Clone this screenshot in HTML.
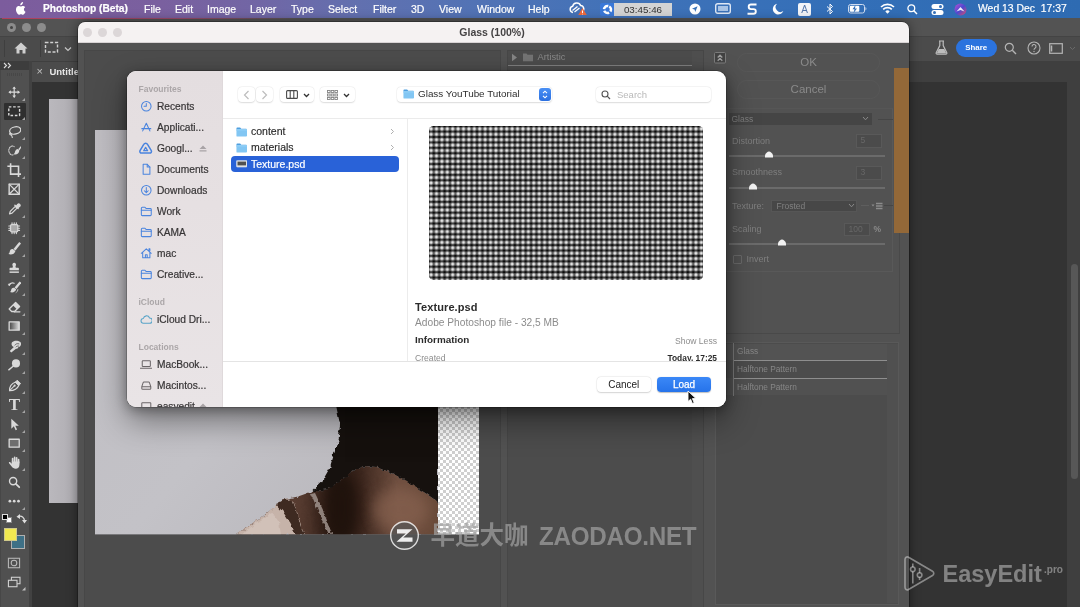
<!DOCTYPE html>
<html><head><meta charset="utf-8"><title>Glass</title>
<style>
*{box-sizing:border-box;margin:0;padding:0}
html,body{width:1080px;height:607px;overflow:hidden;background:#323232;font-family:"Liberation Sans","Noto Sans CJK SC",sans-serif;}
.a{position:absolute}
#root{will-change:transform;position:relative;width:1080px;height:607px;overflow:hidden;background:#323232}
/* menubar */
#menubar{left:0;top:0;width:1080px;height:18.500px;background:linear-gradient(90deg,#7c5c9d 0%,#7a609f 15%,#7166a5 24%,#6270af 33%,#5273b5 44%,#4072b8 58%,#336fb8 78%,#2e6bb2 100%);color:#fff;font-size:10.5px;line-height:18px;white-space:nowrap}
#menubar span{position:absolute;top:0;-webkit-text-stroke:.2px #fff}
/* ps chrome */
#pstop{left:0;top:18px;width:1080px;height:18px;background:#535353}
#psopt{left:0;top:36px;width:1080px;height:25px;background:#4b4b4b;border-top:1px solid #444}
.tl{width:9px;height:9px;border-radius:50%}
.sbi{font-size:10.200px;line-height:14px;color:#373536;white-space:nowrap;-webkit-text-stroke:.2px #373536}
.sbh{font-size:8.500px;font-weight:bold;line-height:14px;color:#aba6a8;white-space:nowrap}
.tb{background:#fff;border-radius:4px;box-shadow:0 0 0 .5px rgba(0,0,0,.045),0 .5px 1.500px rgba(0,0,0,.12)}
.fl{font-size:10.500px;line-height:14px;color:#2a2a2a;white-space:nowrap;-webkit-text-stroke:.15px #2a2a2a}
.gl{font-size:9px;line-height:13px;color:#7f7f7f;white-space:nowrap}
.gs{font-size:8.300px;line-height:13px;color:#878787;white-space:nowrap}
.gb{border:1px solid #595959;background:#4b4b4b;color:#686868;font-size:8.500px;line-height:11px;padding-left:4px}
.sl{left:729px;width:156px;height:2px;background:#6b6b6b}
</style></head><body><div id="root">
<div id="menubar" class="a">
<svg class="a" style="left:14px;top:2px" width="12" height="14" viewBox="0 0 12 14"><path fill="#fff" d="M8.3 2.2C8.9 1.5 9.2.7 9.1 0 8.400.05 7.600.5 7.100 1.100 6.600 1.600 6.200 2.500 6.300 3.200 7.100 3.250 7.800 2.800 8.300 2.200ZM9.900 7.400C9.900 5.900 11.100 5.200 11.200 5.150 10.500 4.150 9.400 4 9.050 4 8.100 3.900 7.250 4.550 6.800 4.550 6.300 4.550 5.600 4 4.850 4.020 3.850 4.040 2.950 4.600 2.450 5.480 1.400 7.250 2.180 9.900 3.180 11.350 3.680 12.060 4.270 12.850 5.050 12.820 5.800 12.790 6.080 12.340 6.980 12.340 7.880 12.340 8.140 12.820 8.930 12.800 9.740 12.790 10.250 12.080 10.740 11.360 11.310 10.540 11.540 9.750 11.560 9.700 11.540 9.700 9.910 9.070 9.900 7.400Z"/></svg>
<span style="left:43px;font-weight:bold;font-size:10.200px" id="m0">Photoshop (Beta)</span>
<span style="left:144px" id="m1">File</span>
<span style="left:175px" id="m2">Edit</span>
<span style="left:207px" id="m3">Image</span>
<span style="left:250px" id="m4">Layer</span>
<span style="left:291px" id="m5">Type</span>
<span style="left:328px" id="m6">Select</span>
<span style="left:373px" id="m7">Filter</span>
<span style="left:411px" id="m8">3D</span>
<span style="left:439px" id="m9">View</span>
<span style="left:477px" id="m10">Window</span>
<span style="left:528px" id="m11">Help</span>
<!-- status icons -->
<svg class="a" style="left:568px;top:2px" width="20" height="14" viewBox="0 0 20 14"><path d="M5 10.500a3.200 3.200 0 0 1-.3-6.300 4.200 4.200 0 0 1 8-.6 3.300 3.300 0 0 1 1.300 6.200" fill="none" stroke="#fff" stroke-width="1.500"/><path d="M4.500 8.500 9.500 4.500M6.500 10 11.500 6" stroke="#fff" stroke-width="1.300"/><path d="M14.500 6 18.800 13h-8.600z" fill="#f06a3c"/><path d="M14.500 8.500v2.500M14.500 11.800v.6" stroke="#fff" stroke-width="1"/></svg>
<div class="a" style="left:600px;top:2.500px;width:14px;height:13px;background:#3a78d8;border-radius:2px 0 0 2px"></div>
<svg class="a" style="left:601.500px;top:3.500px" width="11" height="11" viewBox="0 0 11 11"><circle cx="5.500" cy="5.500" r="3.500" fill="none" stroke="#fff" stroke-width="2.500" stroke-dasharray="5.700 1.630" transform="rotate(-60 5.500 5.500)"/></svg>
<div class="a" style="left:614px;top:2.500px;width:58px;height:13px;background:#d4d4d4;color:#333;font-size:9.800px;line-height:13px;text-align:center">03:45:46</div>
<svg class="a" style="left:689px;top:3px" width="12" height="12" viewBox="0 0 12 12"><circle cx="6" cy="6" r="5.500" fill="#fff"/><path d="M8.600 3.200 3 5.800l2.600.6.600 2.600z" fill="#3570b8"/></svg>
<svg class="a" style="left:715px;top:3px" width="16" height="12" viewBox="0 0 16 12"><rect x=".7" y=".7" width="14.600" height="9.600" rx="2" fill="none" stroke="#dfe8f5" stroke-width="1.400"/><rect x="3" y="3" width="10" height="5" fill="#aac4e6"/></svg>
<svg class="a" style="left:746px;top:3px" width="12" height="12" viewBox="0 0 12 12"><path d="M10.500 1.500H5a2.300 2.300 0 0 0 0 4.600h2.500a2.300 2.300 0 0 1 0 4.600H1.500" fill="none" stroke="#fff" stroke-width="1.900"/></svg>
<svg class="a" style="left:772px;top:3px" width="12" height="12" viewBox="0 0 12 12"><path d="M5 .8A5.400 5.400 0 1 0 11.300 8 4.800 4.800 0 0 1 5 .8Z" fill="#fff"/></svg>
<div class="a" style="left:798px;top:3px;width:13px;height:13px;background:#f2f4f8;border-radius:2px;color:#5577aa;font-size:10px;line-height:13px;text-align:center">A</div>
<svg class="a" style="left:826px;top:3px" width="8" height="12" viewBox="0 0 8 12"><path d="M1 3.500 6.500 8.500 4 11V1l2.500 2.500L1 8.500" fill="none" stroke="#fff" stroke-width="1"/></svg>
<svg class="a" style="left:848px;top:4px" width="20" height="10" viewBox="0 0 20 10"><rect x=".5" y=".5" width="16" height="8.500" rx="2" fill="none" stroke="#cfdcf0" stroke-width="1"/><rect x="1.800" y="1.800" width="9.500" height="6" rx="1" fill="#fff"/><path d="M17.500 3v3.500c1.200-.3 1.200-3.200 0-3.500z" fill="#cfdcf0"/><path d="M7.500 1 4.500 5.300h2L5.500 9l3.500-4.500H7z" fill="#3570b8"/></svg>
<svg class="a" style="left:880px;top:3px" width="15" height="11" viewBox="0 0 15 11"><path d="M1 4a9.500 9.500 0 0 1 13 0M3.200 6.300a6.300 6.300 0 0 1 8.600 0" fill="none" stroke="#fff" stroke-width="1.700"/><path d="M5.300 8.400a3.200 3.200 0 0 1 4.400 0L7.500 10.800z" fill="#fff"/></svg>
<svg class="a" style="left:907px;top:4px" width="11" height="11" viewBox="0 0 11 11"><circle cx="4.300" cy="4.300" r="3.400" fill="none" stroke="#fff" stroke-width="1.300"/><path d="M6.800 6.800 10 10" stroke="#fff" stroke-width="1.500"/></svg>
<svg class="a" style="left:931px;top:4px" width="13" height="11" viewBox="0 0 13 11"><rect x=".5" y="0" width="12" height="5" rx="2.500" fill="#fff"/><circle cx="9.500" cy="2.500" r="1.500" fill="#3570b8"/><rect x=".5" y="6" width="12" height="5" rx="2.500" fill="#fff"/><circle cx="3.500" cy="8.500" r="1.500" fill="#3570b8"/></svg>
<svg class="a" style="left:954px;top:3px" width="13" height="13" viewBox="0 0 13 13"><defs><linearGradient id="siri" x1="0" y1="0" x2="1" y2="1"><stop offset="0" stop-color="#c04fd0"/><stop offset=".5" stop-color="#4a4ad0"/><stop offset="1" stop-color="#e04a6a"/></linearGradient></defs><circle cx="6.500" cy="6.500" r="6" fill="url(#siri)"/><path d="M2.500 8.500 6.500 4l4 4.500-4-1.500z" fill="#fff" opacity=".9"/></svg>
<span style="left:978px;font-size:10.400px;" id="mdate">Wed 13 Dec&nbsp;&nbsp;17:37</span>
</div>


<div id="pstop" class="a"></div>
<div class="a" style="left:2px;top:18px;width:300px;height:1px;background:linear-gradient(90deg,#b0405a,#9a4a6a 60%,rgba(120,80,120,0))"></div>
<div class="a tl" style="left:6.500px;top:22.500px;background:#8c8c8c"></div><div class="a" style="left:9.500px;top:25.500px;width:3px;height:3px;border-radius:50%;background:#444"></div>
<div class="a tl" style="left:21.500px;top:22.500px;background:#8c8c8c"></div>
<div class="a tl" style="left:36.500px;top:22.500px;background:#8c8c8c"></div>
<div id="psopt" class="a"></div>
<div class="a" style="left:4px;top:40px;width:1px;height:17px;background:#3f3f3f"></div>
<svg class="a" style="left:14px;top:42px" width="14" height="12" viewBox="0 0 14 12"><path d="M7 .5.500 6.500H2.500V11.500H5.500V8H8.500V11.500H11.500V6.500H13.500z" fill="#cfcfcf"/></svg>
<div class="a" style="left:40px;top:40px;width:1px;height:17px;background:#3d3d3d"></div>
<svg class="a" style="left:44px;top:41px" width="15" height="13" viewBox="0 0 15 13"><rect x="1.500" y="1.500" width="12" height="9.500" fill="none" stroke="#d0d0d0" stroke-width="1.400" stroke-dasharray="3 1.700"/></svg>
<svg class="a" style="left:64px;top:46px" width="8" height="6" viewBox="0 0 8 6"><path d="M1 1.500 4 4.500 7 1.500" fill="none" stroke="#c8c8c8" stroke-width="1.200"/></svg>
<!-- tab strip / document -->
<div class="a" style="left:0;top:61px;width:1080px;height:21px;background:#3f3f3f"></div>
<div class="a" style="left:0;top:82px;width:1080px;height:525px;background:#333"></div>
<div class="a" style="left:31.600px;top:61.500px;width:60px;height:20.300px;background:#4b4b4b"></div>
<div class="a" style="left:36.600px;top:61px;width:60px;height:21px;line-height:21px;color:#e8e8e8;font-size:9.500px;font-weight:bold;white-space:nowrap"><span style="font-weight:normal;color:#c0c0c0;font-size:11px;margin-right:6.400px">×</span><span id="untitle">Untitle</span></div>
<div class="a" style="left:49px;top:99px;width:40px;height:404px;background:linear-gradient(90deg,#bab8bd,#b2b0b5 50%,#a5a3a8)"></div>
<!-- toolbar -->
<div class="a" style="left:0;top:61px;width:31.600px;height:546px;background:#424242"></div><div class="a" style="left:0;top:61px;width:29.200px;height:546px;background:#505050;border-left:1px solid #474747"></div>
<div class="a" style="left:0;top:61px;width:29.200px;height:9.300px;background:#3d3d3d"></div>
<svg class="a" style="left:3px;top:62px" width="9" height="7" viewBox="0 0 9 7"><path d="M1 1 3.500 3.500 1 6M5 1 7.500 3.500 5 6" fill="none" stroke="#ddd" stroke-width="1.100"/></svg>
<div class="a" style="left:7px;top:73px;width:15px;height:3px;background:repeating-linear-gradient(90deg,#474747 0 1px,#505050 1px 2px)"></div>
<div class="a" style="left:3.500px;top:102.500px;width:22.500px;height:17px;background:#2f2f2f;border-radius:1px"></div>
<svg class="a" style="left:6.8px;top:84.8px" width="14.4" height="14.4" viewBox="0 0 20 20" fill="none" stroke="#d9d9d9" stroke-width="1.600" stroke-linecap="round" stroke-linejoin="round"><path transform="translate(1.5 1.5) scale(.85)" d="M10 2.500v15M2.500 10h15" stroke-width="1.95"/><path transform="translate(1.5 1.5) scale(.85)" d="M10 .5 7 4.500h6zM10 19.500 7 15.500h6zM.5 10 4.500 7v6zM19.500 10 15.500 7v6z" fill="#d9d9d9" stroke="none"/></svg>
<svg class="a" style="left:22px;top:97.5px" width="3" height="3" viewBox="0 0 4 4"><path d="M4 0V4H0z" fill="#a4a4a4"/></svg>
<svg class="a" style="left:6.8px;top:103.8px" width="14.4" height="14.4" viewBox="0 0 20 20" fill="none" stroke="#d9d9d9" stroke-width="1.600" stroke-linecap="round" stroke-linejoin="round"><rect x="2.500" y="4" width="15" height="12" stroke-width="1.95" stroke-dasharray="3.600 2.400" stroke-linecap="butt"/></svg>
<svg class="a" style="left:22px;top:116.5px" width="3" height="3" viewBox="0 0 4 4"><path d="M4 0V4H0z" fill="#a4a4a4"/></svg>
<svg class="a" style="left:6.8px;top:123.8px" width="14.4" height="14.4" viewBox="0 0 20 20" fill="none" stroke="#d9d9d9" stroke-width="1.600" stroke-linecap="round" stroke-linejoin="round"><ellipse cx="11.400" cy="9" rx="7.800" ry="5" transform="rotate(-14 11.4 9)" stroke-width="1.700"/><path d="M4.500 12.500c-1.300.8-1 2.600.6 2.600 1.200 0 1.400-1.500.3-2M5.500 15c1 .8 1.800 2.500 2 4.500" stroke-width="1.500"/></svg>
<svg class="a" style="left:22px;top:136.5px" width="3" height="3" viewBox="0 0 4 4"><path d="M4 0V4H0z" fill="#a4a4a4"/></svg>
<svg class="a" style="left:6.8px;top:143.3px" width="14.4" height="14.4" viewBox="0 0 20 20" fill="none" stroke="#d9d9d9" stroke-width="1.600" stroke-linecap="round" stroke-linejoin="round"><path d="M8.500 16.500a5 6.200 0 1 1 1.500-11.500" stroke-dasharray="1.800 1.500" stroke-width="1.400"/><path d="M20 3.500 15.800 8.500l1.600 1.600L20.800 5z" fill="#d9d9d9" stroke="none"/><path d="M15.500 8.500c-3.200.2-4.200 2.500-4.500 4.500-.2 1.200-.8 2-1.800 2.500 3.500 1.300 7.500-.5 8-5z" fill="#d9d9d9" stroke="none"/></svg>
<svg class="a" style="left:22px;top:156.0px" width="3" height="3" viewBox="0 0 4 4"><path d="M4 0V4H0z" fill="#a4a4a4"/></svg>
<svg class="a" style="left:6.8px;top:162.8px" width="14.4" height="14.4" viewBox="0 0 20 20" fill="none" stroke="#d9d9d9" stroke-width="1.600" stroke-linecap="round" stroke-linejoin="round"><path d="M5 .5v15h15M.5 4.500h15.500v15.500" stroke-width="2.200" stroke-linecap="butt" stroke-linejoin="miter"/></svg>
<svg class="a" style="left:22px;top:175.5px" width="3" height="3" viewBox="0 0 4 4"><path d="M4 0V4H0z" fill="#a4a4a4"/></svg>
<svg class="a" style="left:6.8px;top:182.3px" width="14.4" height="14.4" viewBox="0 0 20 20" fill="none" stroke="#d9d9d9" stroke-width="1.600" stroke-linecap="round" stroke-linejoin="round"><rect x="3" y="3" width="14" height="14" stroke-width="1.95"/><path d="M3 3 17 17M17 3 3 17" stroke-width="1.69"/></svg>
<svg class="a" style="left:6.8px;top:201.8px" width="14.4" height="14.4" viewBox="0 0 20 20" fill="none" stroke="#d9d9d9" stroke-width="1.600" stroke-linecap="round" stroke-linejoin="round"><path d="M3.500 16.500 4.500 13l7-7 2.500 2.500-7 7z" stroke-width="1.69"/><path d="M11 4.500 15.500 9M12.500 6.500l2.500-3a1.700 1.700 0 0 1 2.500 2.500l-3 2.500z" fill="#d9d9d9" stroke-width="1.95"/></svg>
<svg class="a" style="left:22px;top:214.5px" width="3" height="3" viewBox="0 0 4 4"><path d="M4 0V4H0z" fill="#a4a4a4"/></svg>
<svg class="a" style="left:6.8px;top:221.3px" width="14.4" height="14.4" viewBox="0 0 20 20" fill="none" stroke="#d9d9d9" stroke-width="1.600" stroke-linecap="round" stroke-linejoin="round"><rect x="5" y="5" width="10" height="10" rx="1.500" fill="#a9a9a9" stroke-width="1.69"/><path d="M7 2.500v2M10 2.500v2M13 2.500v2M7 15.500v2M10 15.500v2M13 15.500v2M2.500 7h2M2.500 10h2M2.500 13h2M15.500 7h2M15.500 10h2M15.500 13h2" stroke-width="1.56"/></svg>
<svg class="a" style="left:22px;top:234.0px" width="3" height="3" viewBox="0 0 4 4"><path d="M4 0V4H0z" fill="#a4a4a4"/></svg>
<svg class="a" style="left:6.8px;top:240.8px" width="14.4" height="14.4" viewBox="0 0 20 20" fill="none" stroke="#d9d9d9" stroke-width="1.600" stroke-linecap="round" stroke-linejoin="round"><path d="M17 1.500 19.500 3.500 11.800 13.200 9 11z" fill="#d9d9d9" stroke="none"/><path d="M8.500 11.300c-3-.5-4.500 1.500-4.700 3.700-.2 1.500-.8 2.500-1.800 3 3.500 1.500 8.500.5 9.700-4.200z" fill="#d9d9d9" stroke="none"/></svg>
<svg class="a" style="left:22px;top:253.5px" width="3" height="3" viewBox="0 0 4 4"><path d="M4 0V4H0z" fill="#a4a4a4"/></svg>
<svg class="a" style="left:6.8px;top:260.8px" width="14.4" height="14.4" viewBox="0 0 20 20" fill="none" stroke="#d9d9d9" stroke-width="1.600" stroke-linecap="round" stroke-linejoin="round"><path d="M10 2.500a2.600 2.600 0 0 0-2.300 3.800c.6 1.200.6 2.200-.2 3.200H4.500a1 1 0 0 0-1 1V13h13v-2.500a1 1 0 0 0-1-1h-3c-.8-1-.8-2-.2-3.200A2.600 2.600 0 0 0 10 2.500z" fill="#d9d9d9" stroke="none"/><path d="M3.500 15.500h13" stroke-width="2.08" stroke-linecap="butt"/></svg>
<svg class="a" style="left:22px;top:273.5px" width="3" height="3" viewBox="0 0 4 4"><path d="M4 0V4H0z" fill="#a4a4a4"/></svg>
<svg class="a" style="left:6.8px;top:280.3px" width="14.4" height="14.4" viewBox="0 0 20 20" fill="none" stroke="#d9d9d9" stroke-width="1.600" stroke-linecap="round" stroke-linejoin="round"><path d="M17.500 2 20 4 13.200 12.500 10.500 10.500z" fill="#d9d9d9" stroke="none"/><path d="M10 10.800c-2.800-.4-4 1.300-4.200 3.200-.2 1.300-.7 2.200-1.600 2.600 3 1.400 7.500.5 8.500-3.700z" fill="#d9d9d9" stroke="none"/><path d="M3 7.500a5.500 5.500 0 0 1 7-3" stroke-width="1.600"/><path d="M1 5.500 5.500 4.500 3.500 8.500z" fill="#d9d9d9" stroke="none"/><path d="M15 13.500a5 5 0 0 1-2.500 4" stroke-dasharray="1.500 1.500" stroke-width="1.200"/></svg>
<svg class="a" style="left:22px;top:293.0px" width="3" height="3" viewBox="0 0 4 4"><path d="M4 0V4H0z" fill="#a4a4a4"/></svg>
<svg class="a" style="left:6.8px;top:299.8px" width="14.4" height="14.4" viewBox="0 0 20 20" fill="none" stroke="#d9d9d9" stroke-width="1.600" stroke-linecap="round" stroke-linejoin="round"><path d="M12 3.500 17.500 9l-7 7H6.500L3 12.500z" stroke-width="1.82"/><path d="M12 3.500 17.500 9l-3.800 3.800L8.200 7.300z" fill="#d9d9d9" stroke="none"/><path d="M10 16.500h8" stroke-width="1.69"/></svg>
<svg class="a" style="left:22px;top:312.5px" width="3" height="3" viewBox="0 0 4 4"><path d="M4 0V4H0z" fill="#a4a4a4"/></svg>
<svg class="a" style="left:6.8px;top:318.8px" width="14.4" height="14.4" viewBox="0 0 20 20" fill="none" stroke="#d9d9d9" stroke-width="1.600" stroke-linecap="round" stroke-linejoin="round"><defs><linearGradient id="gg" x1="0" x2="1"><stop offset="0" stop-color="#444"/><stop offset="1" stop-color="#ddd"/></linearGradient></defs><rect x="3" y="4" width="14" height="11.500" fill="url(#gg)" stroke-width="1.82"/></svg>
<svg class="a" style="left:22px;top:331.5px" width="3" height="3" viewBox="0 0 4 4"><path d="M4 0V4H0z" fill="#a4a4a4"/></svg>
<svg class="a" style="left:6.8px;top:338.8px" width="14.4" height="14.4" viewBox="0 0 20 20" fill="none" stroke="#d9d9d9" stroke-width="1.600" stroke-linecap="round" stroke-linejoin="round"><path d="M7 4.500C9 2 15 1.500 18.500 4c2 2 1 6-1.500 7l-1.500.5c0 1.500-1.500 2.500-3 2L6 18.800 3.800 16.600 9.500 11C6.500 10 5.500 7 7 4.500z" fill="#d9d9d9" stroke="none"/><path d="M11 8.500c1-1.800 3-2.500 5.500-1.800M12.500 11c.8-1 2-1.400 3.500-1.200" stroke="#4f4f4f" stroke-width="1.100"/></svg>
<svg class="a" style="left:22px;top:351.5px" width="3" height="3" viewBox="0 0 4 4"><path d="M4 0V4H0z" fill="#a4a4a4"/></svg>
<svg class="a" style="left:6.8px;top:358.3px" width="14.4" height="14.4" viewBox="0 0 20 20" fill="none" stroke="#d9d9d9" stroke-width="1.600" stroke-linecap="round" stroke-linejoin="round"><circle cx="12.500" cy="7.500" r="5.600" fill="#d9d9d9" stroke="none"/><path d="M8.500 11.500 2.500 16.500" stroke-width="1.900"/></svg>
<svg class="a" style="left:22px;top:371.0px" width="3" height="3" viewBox="0 0 4 4"><path d="M4 0V4H0z" fill="#a4a4a4"/></svg>
<svg class="a" style="left:6.8px;top:377.8px" width="14.4" height="14.4" viewBox="0 0 20 20" fill="none" stroke="#d9d9d9" stroke-width="1.600" stroke-linecap="round" stroke-linejoin="round"><path d="M3.600 17.500C3.500 12 6 7.500 12 5.500L16.500 10C14.500 15 9.500 17.500 3.600 17.500z" stroke-width="1.700"/><path d="M12 5.500 14.200 3 19 7.800 16.500 10z" fill="#d9d9d9" stroke-width="1.200"/><path d="M3.600 17.500 9.500 11.500" stroke-width="1.400"/><circle cx="10.600" cy="10.600" r="1.500" fill="#d9d9d9" stroke="none"/></svg>
<svg class="a" style="left:22px;top:390.5px" width="3" height="3" viewBox="0 0 4 4"><path d="M4 0V4H0z" fill="#a4a4a4"/></svg>
<div class="a" style="left:5px;top:393px;width:19px;height:24px;color:#d9d9d9;font-family:'Liberation Serif',serif;font-weight:bold;font-size:17px;line-height:24px;text-align:center">T</div>
<svg class="a" style="left:22px;top:410.0px" width="3" height="3" viewBox="0 0 4 4"><path d="M4 0V4H0z" fill="#a4a4a4"/></svg>
<svg class="a" style="left:6.8px;top:416.8px" width="14.4" height="14.4" viewBox="0 0 20 20" fill="none" stroke="#d9d9d9" stroke-width="1.600" stroke-linecap="round" stroke-linejoin="round"><path d="M6 2.500v14l3.500-3.500 2.500 5.500 2-1-2.500-5.300h5z" fill="#d9d9d9" stroke="none"/></svg>
<svg class="a" style="left:22px;top:429.5px" width="3" height="3" viewBox="0 0 4 4"><path d="M4 0V4H0z" fill="#a4a4a4"/></svg>
<svg class="a" style="left:6.8px;top:435.8px" width="14.4" height="14.4" viewBox="0 0 20 20" fill="none" stroke="#d9d9d9" stroke-width="1.600" stroke-linecap="round" stroke-linejoin="round"><rect x="3" y="4.500" width="14" height="11" fill="#6e6e6e" stroke-width="1.82"/></svg>
<svg class="a" style="left:22px;top:448.5px" width="3" height="3" viewBox="0 0 4 4"><path d="M4 0V4H0z" fill="#a4a4a4"/></svg>
<svg class="a" style="left:6.8px;top:455.3px" width="14.4" height="14.4" viewBox="0 0 20 20" fill="none" stroke="#d9d9d9" stroke-width="1.600" stroke-linecap="round" stroke-linejoin="round"><path d="M7.800 10V4.800M10.600 9.500V3.200M13.400 10V4M16.100 11V6.500" stroke-width="2.300"/><path d="M6.600 9h10.700v4.500c0 3.500-2.200 5.500-5.300 5.500-2.500 0-4-1-5.500-3L2.800 11.300c-.8-1.300.8-2.300 1.800-1.300l2 2.200z" fill="#d9d9d9" stroke="none"/></svg>
<svg class="a" style="left:22px;top:468.0px" width="3" height="3" viewBox="0 0 4 4"><path d="M4 0V4H0z" fill="#a4a4a4"/></svg>
<svg class="a" style="left:6.8px;top:474.8px" width="14.4" height="14.4" viewBox="0 0 20 20" fill="none" stroke="#d9d9d9" stroke-width="1.600" stroke-linecap="round" stroke-linejoin="round"><circle cx="8.500" cy="8.500" r="5" stroke-width="1.95"/><path d="M12.300 12.300 17 17" stroke-width="2.47"/></svg>
<svg class="a" style="left:6.8px;top:494.3px" width="14.4" height="14.4" viewBox="0 0 20 20" fill="none" stroke="#d9d9d9" stroke-width="1.600" stroke-linecap="round" stroke-linejoin="round"><circle cx="4" cy="10" r="1.900" fill="#d9d9d9" stroke="none"/><circle cx="10" cy="10" r="1.900" fill="#d9d9d9" stroke="none"/><circle cx="16" cy="10" r="1.900" fill="#d9d9d9" stroke="none"/></svg>
<svg class="a" style="left:22px;top:507.0px" width="3" height="3" viewBox="0 0 4 4"><path d="M4 0V4H0z" fill="#a4a4a4"/></svg>
<!-- swatches -->
<div class="a" style="left:2px;top:514px;width:6px;height:6px;background:#000;border:1px solid #ddd"></div>
<div class="a" style="left:6px;top:517px;width:6px;height:6px;background:#fff;border:1px solid #888"></div>
<div class="a" style="left:2px;top:514px;width:6px;height:6px;background:#000;border:1px solid #ddd"></div>
<svg class="a" style="left:16px;top:513px" width="11" height="11" viewBox="0 0 11 11"><path d="M2.500 3.500c3-1 6 1 6 4.500" fill="none" stroke="#ddd" stroke-width="1.300"/><path d="M.5 3.800 4 1v5zM8.500 10.500 6 7h5z" fill="#ddd"/></svg>
<div class="a" style="left:11.200px;top:535px;width:13.800px;height:13.600px;background:#3e7086;border:1px solid #b0b0b0"></div>
<div class="a" style="left:3.500px;top:527.500px;width:13.800px;height:13.500px;background:#f1e850;border:1px solid #cfc98a"></div>
<svg class="a" style="left:6.700px;top:556.500px" width="14" height="12" viewBox="0 0 16 14"><rect x="1.500" y="1.500" width="13" height="11" fill="none" stroke="#b4b4b4" stroke-width="1.300"/><circle cx="8" cy="7" r="3.300" fill="none" stroke="#bdbdbd" stroke-width="1.200"/></svg>
<svg class="a" style="left:6.700px;top:576px" width="14" height="12" viewBox="0 0 16 14"><rect x="5" y="1.500" width="10" height="7.500" fill="none" stroke="#cfcfcf" stroke-width="1.300"/><rect x="1.500" y="5" width="10" height="7.500" fill="#505050" stroke="#cfcfcf" stroke-width="1.300"/></svg>
<svg class="a" style="left:22px;top:587px" width="4" height="4" viewBox="0 0 4 4"><path d="M3.500 0V3.500H0z" fill="#bdbdbd"/></svg>
<!-- right side chrome -->
<div class="a" style="left:1067px;top:82px;width:13px;height:525px;background:#3f3f3f"></div>
<div class="a" style="left:1070.500px;top:264px;width:7px;height:215px;background:#575757;border-radius:3.500px"></div>
<svg class="a" style="left:935px;top:40px" width="13" height="15" viewBox="0 0 13 15"><path d="M4 1h5M4.800 1v4.500L1.200 12.800a1 1 0 0 0 .9 1.400h8.800a1 1 0 0 0 .9-1.400L8.200 5.500V1" fill="none" stroke="#bdbdbd" stroke-width="1.200"/><path d="M3.800 9h5.400l2 4.300H1.800z" fill="#bdbdbd"/></svg>
<div class="a" style="left:956px;top:38.500px;width:40.500px;height:18.500px;border-radius:9.500px;background:#2b73de;color:#fff;font-size:7.900px;font-weight:bold;line-height:18.500px;text-align:center">Share</div>
<svg class="a" style="left:1004px;top:42px" width="13" height="13" viewBox="0 0 13 13"><circle cx="5.300" cy="5.300" r="4" fill="none" stroke="#b4b4b4" stroke-width="1.200"/><path d="M8.300 8.300 12 12" stroke="#b4b4b4" stroke-width="1.400"/></svg>
<svg class="a" style="left:1027px;top:41px" width="14" height="14" viewBox="0 0 14 14"><circle cx="7" cy="7" r="6" fill="none" stroke="#b4b4b4" stroke-width="1.100"/><path d="M5 5.500a2 2 0 1 1 3 1.700c-.7.400-1 .8-1 1.600" fill="none" stroke="#b4b4b4" stroke-width="1.100"/><circle cx="7" cy="10.500" r=".7" fill="#b4b4b4"/></svg>
<svg class="a" style="left:1049px;top:43px" width="15" height="11" viewBox="0 0 15 11"><rect x=".7" y=".7" width="12.600" height="9.600" fill="none" stroke="#b4b4b4" stroke-width="1.200"/><path d="M2.500 2.500v6" stroke="#b4b4b4" stroke-width="1.500"/></svg>
<svg class="a" style="left:1069px;top:46px" width="7" height="5" viewBox="0 0 7 5"><path d="M1 1 3.500 3.500 6 1" fill="none" stroke="#6a6a6a" stroke-width="1"/></svg>

<div id="gwin" class="a" style="left:77.500px;top:21.500px;width:831.500px;height:600px;background:#525252;border-radius:7px 7px 0 0;box-shadow:0 0 12px rgba(0,0,0,.45),0 0 0 .5px rgba(0,0,0,.5);overflow:hidden">
 <div class="a" style="left:0;top:0;width:100%;height:21.500px;background:#f5f2f2;border-bottom:1px solid #d8d3d4"></div>
 <div class="a tl" style="left:5.500px;top:6px;background:#dcd7d8"></div>
 <div class="a tl" style="left:20.500px;top:6px;background:#dcd7d8"></div>
 <div class="a tl" style="left:35.500px;top:6px;background:#dcd7d8"></div>
 <div class="a" id="gtitle" style="left:0;top:0;width:829px;height:21.500px;line-height:21.500px;text-align:center;font-size:10.500px;font-weight:bold;color:#454344">Glass (100%)</div>
</div>
<!-- preview panel -->
<div class="a" style="left:84px;top:49.500px;width:416.500px;height:560px;background:#4c4c4c;border:1px solid #474747"></div>
<!-- photo -->
<svg class="a" style="left:94.500px;top:129.500px" width="384" height="405" viewBox="0 0 384 405">
 <defs>
  <pattern id="chk" width="6" height="6" patternUnits="userSpaceOnUse"><rect width="6" height="6" fill="#fff"/><rect width="3" height="3" fill="#cfcfcf"/><rect x="3" y="3" width="3" height="3" fill="#cfcfcf"/></pattern>
  <linearGradient id="bgp" x1="0" y1="0" x2="1" y2="1"><stop offset="0" stop-color="#bfbdc2"/><stop offset=".55" stop-color="#c3c2c7"/><stop offset="1" stop-color="#b5b3b8"/></linearGradient>
  <linearGradient id="skin" gradientUnits="userSpaceOnUse" x1="141" y1="0" x2="343" y2="0"><stop offset="0" stop-color="#6e5145"/><stop offset=".32" stop-color="#553a2f"/><stop offset=".48" stop-color="#2c1b14"/><stop offset=".62" stop-color="#3d271e"/><stop offset=".8" stop-color="#6f4f40"/><stop offset="1" stop-color="#684938"/></linearGradient>
  <radialGradient id="skinhl" cx=".68" cy=".55" r=".35"><stop offset="0" stop-color="#8a6452" stop-opacity=".9"/><stop offset="1" stop-color="#6a4636" stop-opacity="0"/></radialGradient>
  <filter id="bl1"><feGaussianBlur stdDeviation="1.200"/></filter>
  <filter id="bl5" x="-100%" y="-100%" width="300%" height="300%" color-interpolation-filters="sRGB"><feGaussianBlur stdDeviation="7"/></filter><filter id="bl3"><feGaussianBlur stdDeviation="3"/></filter>
  <filter id="rough" x="-10%" y="-10%" width="120%" height="120%" color-interpolation-filters="sRGB"><feTurbulence type="fractalNoise" baseFrequency=".22" numOctaves="2" seed="4" result="n"/><feDisplacementMap in="SourceGraphic" in2="n" scale="5" xChannelSelector="R" yChannelSelector="G" result="d"/><feGaussianBlur in="d" stdDeviation=".5"/></filter><clipPath id="photoclip"><path d="M141 405 L154 396 L166 388 L178 378 L188.500 369.500 L203 366.500 L217 361.500 L231 359.500 L245.500 351 L257.700 341 L270 336 L282 337 L298.500 344 L315 353 L331 363.500 L343 372 L343 405 Z"/></clipPath>
 </defs>
 <rect x="0" y="0" width="343" height="405" fill="url(#bgp)"/>
 <rect x="343" y="0" width="41" height="405" fill="url(#chk)"/>
 <clipPath id="pc2"><rect x="0" y="0" width="343" height="404.500"/></clipPath><g id="neck" clip-path="url(#pc2)">
  <!-- skin base -->
  <path filter="url(#rough)" d="M141 405 L154 396 L166 388 L178 378 L188.500 369.500 L203 366.500 L217 361.500 L231 359.500 L245.500 351 L257.700 341 L270 336 L282 337 L298.500 344 L315 353 L331 363.500 L343 372 L343 405 Z" fill="url(#skin)"/>
  <g clip-path="url(#photoclip)"><ellipse cx="306" cy="380" rx="28" ry="22" fill="#86614f" opacity=".75" filter="url(#bl5)"/></g>
  <g clip-path="url(#photoclip)"><ellipse cx="247" cy="378" rx="17" ry="38" fill="#1f120c" opacity=".95" filter="url(#bl5)"/></g>
  <!-- light shoulder -->
  <path filter="url(#rough)" d="M141 405 L156 395 L170 385 L182.500 373.500 L192.500 368.500 L198.500 371.500 L202.700 384 L206.800 398 L209 405Z" fill="#c6b3a9"/>
  <path filter="url(#rough)" d="M181 374 L190 369.500 L197.500 370 L201 380 L205 394 L208.500 405 L201 405 L195.500 393 L188 382Z" fill="#3e2a21"/>
  <path filter="url(#rough)" d="M156 397 L170 387 L178 384 L184 392 L186 405 L146 405Z" fill="#d2c2ba" opacity=".9"/>
  <!-- chain -->
  <path filter="url(#rough)" d="M216 364 L220 363 L228 380 L237 404 L232.500 404 L225 385Z" fill="#9f928c" opacity=".85"/>
  <!-- hair / dark -->
  <path filter="url(#rough)" d="M241.400 277 L245 294.600 L243.500 311 L239.400 322.700 L235.300 337 L227.200 351.200 L217 361.400 L231 359.400 L245.500 351.200 L257.700 341 L270 336 L282.200 337 L298.500 344.100 L314.800 353.300 L331 363.500 L343 372 L343 277 Z" fill="#16110e"/>
  <path d="M250 277h93v55h-93z" fill="#15100d"/>
 </g>
</svg>
<div class="a" style="left:94.500px;top:533.500px;width:384px;height:1px;background:rgba(60,60,60,.55)"></div>
<!-- filter list panel -->
<div class="a" style="left:507px;top:49.500px;width:196.500px;height:560px;background:#4c4c4c;border:1px solid #474747"></div>
<div class="a" style="left:692px;top:50.500px;width:11px;height:560px;background:#4f4f4f"></div>
<svg class="a" style="left:511px;top:52px" width="26" height="11" viewBox="0 0 26 11"><path d="M1 1.800 6 5.500 1 9.200z" fill="#858585"/><path d="M12 1.500h3.500l1 1.200H22V9.300H12z" fill="#737373"/></svg>
<div class="a" style="left:537.500px;top:50px;font-size:9.300px;line-height:14px;color:#888">Artistic</div>
<div class="a" style="left:508px;top:64.800px;width:184px;height:1.300px;background:#808080"></div>
<!-- collapse button -->
<svg class="a" style="left:713.500px;top:52px" width="12" height="11.500" viewBox="0 0 12 11.500"><rect x=".5" y=".5" width="11" height="10.500" rx="1" fill="#424242" stroke="#7c7c7c"/><path d="M3.700 5.500 6 3.200 8.300 5.500M3.700 8.700 6 6.400 8.300 8.700" fill="none" stroke="#a0a0a0" stroke-width="1.300"/></svg>
<!-- right controls -->
<div class="a" style="left:737px;top:53px;width:143px;height:18.500px;border-radius:9.500px;border:1px solid #575757;color:#8a8a8a;font-size:11.500px;line-height:17px;text-align:center">OK</div>
<div class="a" style="left:737px;top:80px;width:143px;height:18.500px;border-radius:9.500px;border:1px solid #575757;color:#8a8a8a;font-size:11.500px;line-height:17px;text-align:center">Cancel</div>
<div class="a" style="left:726px;top:108px;width:167px;height:163.500px;border:1px solid #595959;border-top-color:#565656"></div>
<div class="a" style="left:728.500px;top:112.500px;width:143px;height:12.500px;background:#454545;color:#7e7e7e;font-size:8.500px;line-height:12.500px;padding-left:3px">Glass</div>
<svg class="a" style="left:862px;top:116px" width="7" height="5" viewBox="0 0 7 5"><path d="M1 1 3.500 3.800 6 1" fill="none" stroke="#8a8a8a" stroke-width="1"/></svg>
<div class="a" style="left:878px;top:119px;width:15px;height:1px;background:#464646"></div>
<div class="a gl" style="left:732px;top:135px">Distortion</div>
<div class="a gb" style="left:855.500px;top:133.500px;width:26px;height:14px">5</div>
<div class="a sl" style="top:155px"></div><svg class="a th" style="left:764px;top:151px" width="10" height="7" viewBox="0 0 10 7"><path d="M1 6.500V4.300C1.500 2.500 3.500.6 5 .6S8.500 2.500 9 4.300V6.500z" fill="#f2f2f2"/></svg>
<div class="a gl" style="left:732px;top:166px">Smoothness</div>
<div class="a gb" style="left:855.500px;top:165.500px;width:26px;height:14px">3</div>
<div class="a sl" style="top:186.500px"></div><svg class="a th" style="left:748px;top:182.500px" width="10" height="7" viewBox="0 0 10 7"><path d="M1 6.500V4.300C1.500 2.500 3.500.6 5 .6S8.500 2.500 9 4.300V6.500z" fill="#f2f2f2"/></svg>
<div class="a gl" style="left:732px;top:199.500px">Texture:</div>
<div class="a" style="left:770.500px;top:199.500px;width:86.500px;height:12px;background:#474747;border:1px solid #565656;color:#808080;font-size:8.500px;line-height:10px;padding-left:5px">Frosted</div>
<svg class="a" style="left:848px;top:203px" width="7" height="5" viewBox="0 0 7 5"><path d="M1 1 3.500 3.800 6 1" fill="none" stroke="#8a8a8a" stroke-width="1"/></svg>
<div class="a" style="left:861px;top:205px;width:8px;height:1px;background:#5e5e5e"></div>
<div class="a" style="left:884px;top:205px;width:9px;height:1px;background:#464646"></div>
<svg class="a" style="left:871px;top:202px" width="12" height="8" viewBox="0 0 12 8"><path d="M.5 2.500h3L2 4.500z" fill="#8c8c8c"/><path d="M5 1.500h6.500M5 4h6.500M5 6.500h6.500" stroke="#8c8c8c" stroke-width="1.300"/></svg>
<div class="a gl" style="left:732px;top:222.500px">Scaling</div>
<div class="a gb" style="left:843.500px;top:222.500px;width:26px;height:13px">100</div>
<div class="a" style="left:873.500px;top:222.500px;font-size:8.500px;font-weight:bold;line-height:13px;color:#8a8a8a">%</div>
<div class="a sl" style="top:243px"></div><svg class="a th" style="left:776.500px;top:239px" width="10" height="7" viewBox="0 0 10 7"><path d="M1 6.500V4.300C1.500 2.500 3.500.6 5 .6S8.500 2.500 9 4.300V6.500z" fill="#f2f2f2"/></svg>
<div class="a" style="left:732.500px;top:254.500px;width:9px;height:9px;border:1px solid #6a6a6a;border-radius:1px"></div>
<div class="a gl" style="left:746.500px;top:252.500px">Invert</div>
<div class="a" style="left:715px;top:233px;width:184.500px;height:100.500px;border:1px solid #494949;border-top:none;border-left:none"></div>
<!-- orange bar -->
<div class="a" style="left:894px;top:67.500px;width:15px;height:165.500px;background:#936838"></div>
<!-- layer stack panel -->
<div class="a" style="left:715px;top:342px;width:184px;height:262.500px;background:#4c4c4c;border:1px solid #595959"></div>
<div class="a" style="left:716px;top:343.8px;width:170.500px;height:16px;background:#535353"></div>
<div class="a" style="left:716px;top:378.3px;width:170.500px;height:17px;background:#515151"></div>
<div class="a" style="left:886.500px;top:343.8px;width:11.500px;height:259.500px;background:#505050"></div>
<div class="a" style="left:733px;top:343.3px;width:1px;height:53px;background:#7a7a7a"></div>
<div class="a" style="left:734px;top:359.8px;width:152.500px;height:1px;background:#8e8e8e"></div>
<div class="a" style="left:734px;top:377.8px;width:152.500px;height:1px;background:#8e8e8e"></div>
<div class="a gs" style="left:737px;top:344.8px">Glass</div>
<div class="a gs" style="left:737px;top:362.8px">Halftone Pattern</div>
<div class="a gs" style="left:737px;top:380.8px">Halftone Pattern</div>


<div id="dlg" class="a" style="left:127px;top:71px;width:599px;height:335.500px;border-radius:9px;background:#fff;box-shadow:0 14px 32px rgba(0,0,0,.42),0 3px 12px rgba(0,0,0,.32),0 0 0 .5px rgba(0,0,0,.35);overflow:hidden">
 <div class="a" style="left:0;top:0;width:96px;height:336px;background:linear-gradient(180deg,#e4dee0 0%,#e6e0e2 40%,#e9e4e6 100%);border-right:1px solid #dfd9db"></div>
 <div class="a sbh" style="left:11.5px;top:11.1px">Favourites</div>
 <div class="a sbi" style="left:30px;top:28.6px">Recents</div>
 <div class="a sbi" style="left:30px;top:49.6px">Applicati...</div>
 <div class="a sbi" style="left:30px;top:70.6px">Googl...</div>
 <div class="a sbi" style="left:30px;top:91.6px">Documents</div>
 <div class="a sbi" style="left:30px;top:112.6px">Downloads</div>
 <div class="a sbi" style="left:30px;top:133.6px">Work</div>
 <div class="a sbi" style="left:30px;top:154.6px">KAMA</div>
 <div class="a sbi" style="left:30px;top:175.6px">mac</div>
 <div class="a sbi" style="left:30px;top:196.6px">Creative...</div>
 <div class="a sbh" style="left:11.5px;top:223.6px">iCloud</div>
 <div class="a sbi" style="left:30px;top:241.6px">iCloud Dri...</div>
 <div class="a sbh" style="left:11.5px;top:268.6px">Locations</div>
 <div class="a sbi" style="left:30px;top:286.6px">MacBook...</div>
 <div class="a sbi" style="left:30px;top:307.6px">Macintos...</div>
 <div class="a sbi" style="left:30px;top:328.6px">easyedit</div>
 <svg class="a" style="left:12.7px;top:29px" width="12.6" height="12.6" viewBox="0 0 14 14" fill="none" stroke="#4a84de" stroke-width="1.150" stroke-linecap="round" stroke-linejoin="round"><circle cx="7" cy="7" r="5.300"/><path d="M7 3.800V7H4.500"/></svg>
 <svg class="a" style="left:12.7px;top:50px" width="12.6" height="12.6" viewBox="0 0 14 14" fill="none" stroke="#4a84de" stroke-width="1.150" stroke-linecap="round" stroke-linejoin="round"><path d="M7 2.500 3 11M7 2.500 11 11M2 8.500h10M5.500 5.500l1.500-3 1.500 3" stroke-width="1.200"/></svg>
 <svg class="a" style="left:12.35px;top:70.65px" width="13.3" height="13.3" viewBox="0 0 14 14" fill="none" stroke="#4a84de" stroke-width="1.150" stroke-linecap="round" stroke-linejoin="round"><path d="M7 1.300c.9 0 1.500.4 2 1.300l3.800 6.300c.8 1.400 0 2.800-1.700 2.800H2.900c-1.700 0-2.500-1.400-1.700-2.800L5 2.600c.5-.9 1.100-1.300 2-1.300z" stroke-width="1.600"/><path d="M7 5.600 9.100 9.200H4.900z" stroke-width="1.300"/></svg>
 <svg class="a" style="left:72px;top:73.5px" width="8" height="7" viewBox="0 0 8 7"><path d="M4 .5 7.500 4H.5zM.5 5.200h7v1.300h-7z" fill="#a8a3a5"/></svg>
 <svg class="a" style="left:12.7px;top:92px" width="12.6" height="12.6" viewBox="0 0 14 14" fill="none" stroke="#4a84de" stroke-width="1.150" stroke-linecap="round" stroke-linejoin="round"><path d="M3.500 1.500h4.500l3 3V12.500h-7.500z"/><path d="M8 1.500v3h3"/></svg>
 <svg class="a" style="left:12.7px;top:113px" width="12.6" height="12.6" viewBox="0 0 14 14" fill="none" stroke="#4a84de" stroke-width="1.150" stroke-linecap="round" stroke-linejoin="round"><circle cx="7" cy="7" r="5.300"/><path d="M7 4v5.500M4.800 7.500 7 9.700 9.200 7.500"/></svg>
 <svg class="a" style="left:12.7px;top:134px" width="12.6" height="12.6" viewBox="0 0 14 14" fill="none" stroke="#4a84de" stroke-width="1.150" stroke-linecap="round" stroke-linejoin="round"><path d="M1.500 3.500a1 1 0 0 1 1-1h3l1.200 1.300h4.800a1 1 0 0 1 1 1v6a1 1 0 0 1-1 1h-9a1 1 0 0 1-1-1z"/><path d="M1.500 5.800h11"/></svg>
 <svg class="a" style="left:12.7px;top:155px" width="12.6" height="12.6" viewBox="0 0 14 14" fill="none" stroke="#4a84de" stroke-width="1.150" stroke-linecap="round" stroke-linejoin="round"><path d="M1.500 3.500a1 1 0 0 1 1-1h3l1.200 1.300h4.800a1 1 0 0 1 1 1v6a1 1 0 0 1-1 1h-9a1 1 0 0 1-1-1z"/><path d="M1.500 5.800h11"/></svg>
 <svg class="a" style="left:12.7px;top:176px" width="12.6" height="12.6" viewBox="0 0 14 14" fill="none" stroke="#4a84de" stroke-width="1.150" stroke-linecap="round" stroke-linejoin="round"><path d="M1.500 7 7 2l5.500 5M3 6v6h8V6M6 12V8.500h2V12M10 3.200V2h1v2.200"/></svg>
 <svg class="a" style="left:12.7px;top:197px" width="12.6" height="12.6" viewBox="0 0 14 14" fill="none" stroke="#4a84de" stroke-width="1.150" stroke-linecap="round" stroke-linejoin="round"><path d="M1.500 3.500a1 1 0 0 1 1-1h3l1.200 1.300h4.800a1 1 0 0 1 1 1v6a1 1 0 0 1-1 1h-9a1 1 0 0 1-1-1z"/><path d="M1.500 5.800h11"/></svg>
 <svg class="a" style="left:12.7px;top:242px" width="12.6" height="12.6" viewBox="0 0 14 14" fill="none" stroke="#58a4c8" stroke-width="1.150" stroke-linecap="round" stroke-linejoin="round"><path d="M4 11.500a2.700 2.700 0 0 1-.3-5.400 3.600 3.600 0 0 1 6.900-.6 3 3 0 0 1-.1 6z" stroke="#58a4c8"/></svg>
 <svg class="a" style="left:12.7px;top:287px" width="12.6" height="12.6" viewBox="0 0 14 14" fill="none" stroke="#6b6668" stroke-width="1.150" stroke-linecap="round" stroke-linejoin="round"><rect x="2.500" y="3" width="9" height="6.500" rx=".7"/><path d=".5 11.500h13"/><path d="M.5 11.300h13"/></svg>
 <svg class="a" style="left:12.7px;top:308px" width="12.6" height="12.6" viewBox="0 0 14 14" fill="none" stroke="#6b6668" stroke-width="1.150" stroke-linecap="round" stroke-linejoin="round"><path d="M2 8.500 3.500 4a1 1 0 0 1 1-.7h5a1 1 0 0 1 1 .7L12 8.500v2a1 1 0 0 1-1 1H3a1 1 0 0 1-1-1zM2 8.500h10"/></svg>
 <svg class="a" style="left:12.7px;top:329px" width="12.6" height="12.6" viewBox="0 0 14 14" fill="none" stroke="#6b6668" stroke-width="1.150" stroke-linecap="round" stroke-linejoin="round"><rect x="2" y="3" width="10" height="7.500" rx=".7"/></svg>
 <svg class="a" style="left:72px;top:331.5px" width="8" height="7" viewBox="0 0 8 7"><path d="M4 .5 7.500 4H.5zM.5 5.200h7v1.300h-7z" fill="#a8a3a5"/></svg>
 <!-- toolbar -->
 <div class="a tb" style="left:111px;top:16px;width:17.300px;height:14.500px"></div><div class="a tb" style="left:129.200px;top:16px;width:17.300px;height:14.500px"></div>
 <svg class="a" style="left:116px;top:18.500px" width="7" height="10" viewBox="0 0 7 10"><path d="M5.500 1 1.500 5l4 4" fill="none" stroke="#bdbdbd" stroke-width="1.200"/></svg>
 <svg class="a" style="left:134px;top:18.500px" width="7" height="10" viewBox="0 0 7 10"><path d="M1.500 1l4 4-4 4" fill="none" stroke="#bdbdbd" stroke-width="1.200"/></svg>
 <div class="a tb" style="left:152.500px;top:16px;width:34.500px;height:14.500px"></div>
 <svg class="a" style="left:159px;top:19px" width="12" height="9" viewBox="0 0 12 9"><rect x=".6" y=".6" width="10.800" height="7.800" rx="1" fill="none" stroke="#4a4a4a" stroke-width="1.100"/><path d="M4.200.6v7.800M7.800.6v7.800" stroke="#4a4a4a" stroke-width="1.100"/></svg>
 <svg class="a" style="left:175.500px;top:21.500px" width="7" height="5" viewBox="0 0 7 5"><path d="M1 1 3.500 3.500 6 1" fill="none" stroke="#333" stroke-width="1.300"/></svg>
 <div class="a tb" style="left:193px;top:16px;width:34.500px;height:14.500px"></div>
 <svg class="a" style="left:200px;top:18.500px" width="11" height="10" viewBox="0 0 11 10" fill="none" stroke="#858585" stroke-width=".9"><rect x=".5" y=".5" width="2.600" height="2"/><rect x="4.200" y=".5" width="2.600" height="2"/><rect x="7.900" y=".5" width="2.600" height="2"/><rect x=".5" y="4" width="2.600" height="2"/><rect x="4.200" y="4" width="2.600" height="2"/><rect x="7.900" y="4" width="2.600" height="2"/><rect x=".5" y="7.500" width="2.600" height="2"/><rect x="4.200" y="7.500" width="2.600" height="2"/><rect x="7.900" y="7.500" width="2.600" height="2"/></svg>
 <svg class="a" style="left:216px;top:21.500px" width="7" height="5" viewBox="0 0 7 5"><path d="M1 1 3.500 3.500 6 1" fill="none" stroke="#333" stroke-width="1.300"/></svg>
 <!-- path popup -->
 <div class="a tb" style="left:270px;top:16px;width:155px;height:14.500px"></div>
 <svg class="a" style="left:275.5px;top:18.3px" width="11.500" height="10" viewBox="0 0 13 11"><path d="M.5 1.500a1 1 0 0 1 1-1h3.200l1.200 1.200h5.600a1 1 0 0 1 1 1V3H.5z" fill="#4f9fdf"/><rect x=".5" y="2.600" width="12" height="8" rx="1" fill="#82c6f3"/><rect x=".5" y="2.600" width="12" height="1" fill="#9ad6fa"/></svg>
 <div class="a" id="ptxt" style="left:291px;top:16px;font-size:9.900px;line-height:14.500px;color:#2e2e2e;white-space:nowrap">Glass YouTube Tutorial</div>
 <div class="a" style="left:412px;top:17px;width:12px;height:12.500px;border-radius:3px;background:linear-gradient(#4a90f5,#2a6fe0)"></div>
 <svg class="a" style="left:415px;top:19px" width="6" height="9" viewBox="0 0 6 9"><path d="M1 3.200 3 1.200 5 3.200M1 5.800 3 7.800 5 5.800" fill="none" stroke="#fff" stroke-width="1.100"/></svg>
 <!-- search -->
 <div class="a tb" style="left:469px;top:16px;width:114.500px;height:14.500px"></div>
 <svg class="a" style="left:474px;top:18.500px" width="10" height="10" viewBox="0 0 10 10"><circle cx="4" cy="4" r="3" fill="none" stroke="#555" stroke-width="1.100"/><path d="M6.200 6.200 9 9" stroke="#555" stroke-width="1.200"/></svg>
 <div class="a" style="left:490px;top:16px;font-size:9.500px;line-height:15px;color:#b9b9b9">Search</div>
 <div class="a" style="left:96px;top:46.500px;width:503px;height:1px;background:#ebebeb"></div>
 <!-- file list -->
 <svg class="a" style="left:108.7px;top:55.7px" width="11.500" height="10" viewBox="0 0 13 11"><path d="M.5 1.500a1 1 0 0 1 1-1h3.200l1.200 1.200h5.600a1 1 0 0 1 1 1V3H.5z" fill="#4f9fdf"/><rect x=".5" y="2.600" width="12" height="8" rx="1" fill="#82c6f3"/><rect x=".5" y="2.600" width="12" height="1" fill="#9ad6fa"/></svg>
 <div class="a fl" style="left:124px;top:52.800px">content</div>
 <svg class="a" style="left:263px;top:56.500px" width="5" height="7" viewBox="0 0 5 7"><path d="M1 1l2.500 2.500L1 6" fill="none" stroke="#b0b0b0" stroke-width="1"/></svg>
 <svg class="a" style="left:108.7px;top:72.2px" width="11.500" height="10" viewBox="0 0 13 11"><path d="M.5 1.500a1 1 0 0 1 1-1h3.200l1.200 1.200h5.600a1 1 0 0 1 1 1V3H.5z" fill="#4f9fdf"/><rect x=".5" y="2.600" width="12" height="8" rx="1" fill="#82c6f3"/><rect x=".5" y="2.600" width="12" height="1" fill="#9ad6fa"/></svg>
 <div class="a fl" style="left:124px;top:69.300px">materials</div>
 <svg class="a" style="left:263px;top:73px" width="5" height="7" viewBox="0 0 5 7"><path d="M1 1l2.500 2.500L1 6" fill="none" stroke="#b0b0b0" stroke-width="1"/></svg>
 <div class="a" style="left:104px;top:85px;width:168px;height:16px;border-radius:4px;background:#2962d8"></div>
 <svg class="a" style="left:108.700px;top:89.300px" width="11.500" height="7.500" viewBox="0 0 11.500 7.500"><rect x=".4" y=".4" width="10.700" height="6.700" rx="1" fill="#e4e4e4" stroke="#cfd6e6" stroke-width=".6"/><rect x="1.500" y="1.600" width="8.500" height="3.800" fill="#505050"/></svg>
 <div class="a fl" style="left:124px;top:85.800px;color:#fff;-webkit-text-stroke:.2px #fff">Texture.psd</div>
 <div class="a" style="left:279.500px;top:47.500px;width:1px;height:243px;background:#ececec"></div>
 <!-- preview texture -->
 <svg class="a" style="left:302px;top:54.500px" width="274" height="154" viewBox="0 0 274 154">
  <defs>
   <radialGradient id="dot" cx=".5" cy=".5" r=".5"><stop offset="0" stop-color="#f2f2f2"/><stop offset=".3" stop-color="#e2e2e2"/><stop offset=".58" stop-color="#aeaeae" stop-opacity=".95"/><stop offset=".82" stop-color="#727272" stop-opacity=".6"/><stop offset="1" stop-color="#5a5a5a" stop-opacity="0"/></radialGradient>
   <linearGradient id="rowb" x1="0" y1="0" x2="0" y2="1"><stop offset="0" stop-color="#606060" stop-opacity="0"/><stop offset=".25" stop-color="#606060" stop-opacity="1"/><stop offset=".75" stop-color="#606060" stop-opacity="1"/><stop offset="1" stop-color="#606060" stop-opacity="0"/></linearGradient>
   <linearGradient id="colb" x1="0" y1="0" x2="1" y2="0"><stop offset="0" stop-color="#404040" stop-opacity="0"/><stop offset=".25" stop-color="#404040" stop-opacity="1"/><stop offset=".75" stop-color="#404040" stop-opacity="1"/><stop offset="1" stop-color="#404040" stop-opacity="0"/></linearGradient>
   <pattern id="tex" x="-.62" y=".2" width="5.405" height="5.405" patternUnits="userSpaceOnUse"><rect width="5.405" height="5.405" fill="#0b0b0b"/><rect x=".7" y="0" width="4" height="5.405" fill="url(#colb)"/><rect x="0" y=".6" width="5.405" height="4.200" fill="url(#rowb)"/><rect x=".2" y=".2" width="5" height="5" rx="1.600" fill="url(#dot)"/></pattern>
  </defs>
  <rect width="274" height="154" rx="4.500" fill="url(#tex)"/>
 </svg>
 <!-- info -->
 <div class="a" style="left:288px;top:228.500px;font-size:11px;font-weight:bold;line-height:14px;color:#2b2b2b;letter-spacing:.1px" id="tname">Texture.psd</div>
 <div class="a" style="left:288px;top:245.600px;font-size:10.200px;line-height:12px;color:#8c8c8c;white-space:nowrap" id="tkind">Adobe Photoshop file - 32,5 MB</div>
 <div class="a" style="left:288px;top:262.500px;font-size:9.900px;font-weight:bold;line-height:12px;color:#2b2b2b" id="tinfo">Information</div>
 <div class="a" style="left:500px;width:90px;top:264px;font-size:8.600px;line-height:12px;color:#8c8c8c;text-align:right">Show Less</div>
 <div class="a" style="left:288px;top:280.500px;font-size:8.600px;line-height:12px;color:#8c8c8c">Created</div>
 <div class="a" style="left:500px;width:90px;top:280.500px;font-size:8.400px;font-weight:bold;line-height:12px;color:#2b2b2b;text-align:right">Today, 17:25</div>
 <div class="a" style="left:96px;top:290px;width:503px;height:46px;background:#fff;border-top:1px solid #e4e4e4"></div>
 <div class="a" style="left:470px;top:306px;width:53.500px;height:15px;border-radius:4px;background:#fff;box-shadow:0 0 0 .5px rgba(0,0,0,.06),0 .5px 1.500px rgba(0,0,0,.15);font-size:10px;line-height:15px;text-align:center;color:#222">Cancel</div>
 <div class="a" style="left:530px;top:306px;width:54px;height:15px;border-radius:4px;background:linear-gradient(#3b88f7,#2673ea);font-size:10px;line-height:15px;-webkit-text-stroke:.25px #fff;text-align:center;color:#fff;box-shadow:0 .5px 1px rgba(0,0,0,.25)">Load</div>
</div>
<!-- cursor -->
<svg class="a" style="left:687px;top:390px" width="10" height="15" viewBox="0 0 10 15"><path d="M1 1v10.500l2.600-2.300 1.800 4.300 1.800-.8-1.800-4.100H9z" fill="#111" stroke="#fff" stroke-width=".9" stroke-linejoin="round"/></svg>

<!-- zaodao watermark -->
<svg class="a" style="left:389px;top:520px" width="31" height="31" viewBox="0 0 31 31"><circle cx="15.500" cy="15.500" r="13.800" fill="rgba(85,85,85,.75)" stroke="rgba(255,255,255,.8)" stroke-width="1.400"/><path d="M8 9.300h15.500l-9.300 8.200h9.300v4.200H7.500l9.300-8.200H8z" fill="rgba(255,255,255,.9)"/></svg>
<div class="a" id="wm1" style="left:430.500px;top:520px;font-size:24.500px;line-height:32px;font-weight:bold;color:rgba(160,160,160,.72);white-space:nowrap;font-family:'Liberation Sans','Noto Sans CJK SC',sans-serif">早道大咖</div>
<div class="a" id="wm2" style="left:539px;top:520px;font-size:26.500px;line-height:33px;font-weight:bold;color:rgba(160,160,160,.72);white-space:nowrap;letter-spacing:-.3px;transform:scaleX(.914);transform-origin:0 0">ZAODAO.NET</div>
<!-- easyedit watermark -->
<svg class="a" style="left:902.800px;top:554px" width="34" height="39" viewBox="0 0 34 39" fill="none" stroke="rgba(255,255,255,.42)" stroke-width="1.600" stroke-linejoin="round"><path d="M2 5.500C2 3.500 3.800 2.300 5.500 3.300L29.500 17.300C31.200 18.300 31.200 20.500 29.500 21.500L5.500 35.500C3.800 36.500 2 35.300 2 33.300Z"/><path d="M9.800 9.500V13M9.800 17.600V29.500M16.600 14V18.700M16.600 23.300V26"/><circle cx="9.800" cy="15.300" r="2.300"/><circle cx="16.600" cy="21" r="2.300"/></svg>
<div class="a" id="wm3" style="left:942.500px;top:560.300px;font-size:23.500px;line-height:28px;font-weight:bold;color:rgba(255,255,255,.39);white-space:nowrap">EasyEdit</div>
<div class="a" id="wm4" style="left:1044px;top:564px;font-size:10px;line-height:12px;font-weight:bold;color:rgba(255,255,255,.39);white-space:nowrap">.pro</div>

</div></body></html>
